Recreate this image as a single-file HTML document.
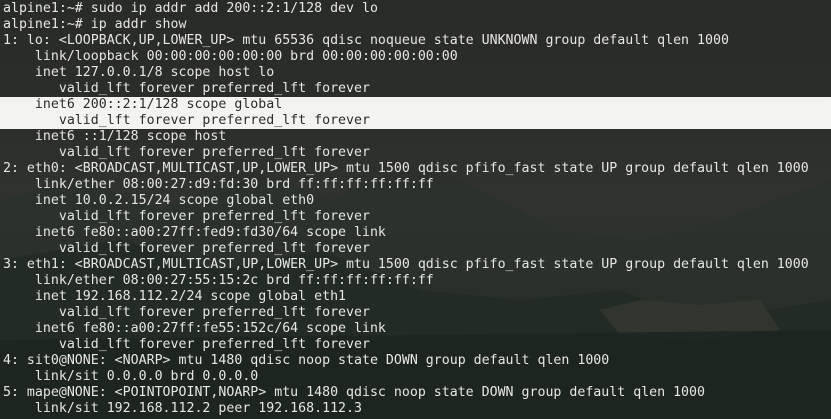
<!DOCTYPE html>
<html><head><meta charset="utf-8"><style>
html,body{margin:0;padding:0;}
body{width:831px;height:419px;overflow:hidden;position:relative;
background:linear-gradient(180deg,#292b29 0%,#2c2e2b 30%,#30332e 50%,#263029 70%,#1f2823 100%);}
svg{position:absolute;left:0;top:0;}
pre{position:absolute;left:3px;top:1px;margin:0;font-family:"DejaVu Sans Mono","Liberation Mono",monospace;font-size:13.25px;line-height:16px;color:#e6e6e4;white-space:pre;}
.hl{position:absolute;left:0;top:97px;width:831px;height:32px;background:#f3f3ef;}
.d{color:#2b2b2b;}
</style></head><body>
<svg width="831" height="419" viewBox="0 0 831 419">
<path d="M0 200 L80 180 L160 210 L250 170 L330 200 L420 160 L480 190 L560 230 L640 240 L720 220 L831 180 L831 419 L0 419Z" fill="#2a312b" opacity="0.8"/>
<path d="M0 260 L120 240 L220 270 L320 250 L420 290 L520 300 L620 290 L700 320 L831 300 L831 419 L0 419Z" fill="#222b25" opacity="0.9"/>
<path d="M600 310 L640 300 L700 305 L760 300 L780 330 L700 340 L620 335Z" fill="#333a2f" opacity="0.8"/>
<path d="M0 340 L831 330 L831 419 L0 419Z" fill="#1c2420" opacity="0.8"/>
</svg>
<div class="hl"></div>
<pre>alpine1:~# sudo ip addr add 200::2:1/128 dev lo
alpine1:~# ip addr show
1: lo: &lt;LOOPBACK,UP,LOWER_UP&gt; mtu 65536 qdisc noqueue state UNKNOWN group default qlen 1000
    link/loopback 00:00:00:00:00:00 brd 00:00:00:00:00:00
    inet 127.0.0.1/8 scope host lo
       valid_lft forever preferred_lft forever
<span class="d">    inet6 200::2:1/128 scope global
       valid_lft forever preferred_lft forever</span>
    inet6 ::1/128 scope host
       valid_lft forever preferred_lft forever
2: eth0: &lt;BROADCAST,MULTICAST,UP,LOWER_UP&gt; mtu 1500 qdisc pfifo_fast state UP group default qlen 1000
    link/ether 08:00:27:d9:fd:30 brd ff:ff:ff:ff:ff:ff
    inet 10.0.2.15/24 scope global eth0
       valid_lft forever preferred_lft forever
    inet6 fe80::a00:27ff:fed9:fd30/64 scope link
       valid_lft forever preferred_lft forever
3: eth1: &lt;BROADCAST,MULTICAST,UP,LOWER_UP&gt; mtu 1500 qdisc pfifo_fast state UP group default qlen 1000
    link/ether 08:00:27:55:15:2c brd ff:ff:ff:ff:ff:ff
    inet 192.168.112.2/24 scope global eth1
       valid_lft forever preferred_lft forever
    inet6 fe80::a00:27ff:fe55:152c/64 scope link
       valid_lft forever preferred_lft forever
4: sit0@NONE: &lt;NOARP&gt; mtu 1480 qdisc noop state DOWN group default qlen 1000
    link/sit 0.0.0.0 brd 0.0.0.0
5: mape@NONE: &lt;POINTOPOINT,NOARP&gt; mtu 1480 qdisc noop state DOWN group default qlen 1000
    link/sit 192.168.112.2 peer 192.168.112.3</pre>
</body></html>
